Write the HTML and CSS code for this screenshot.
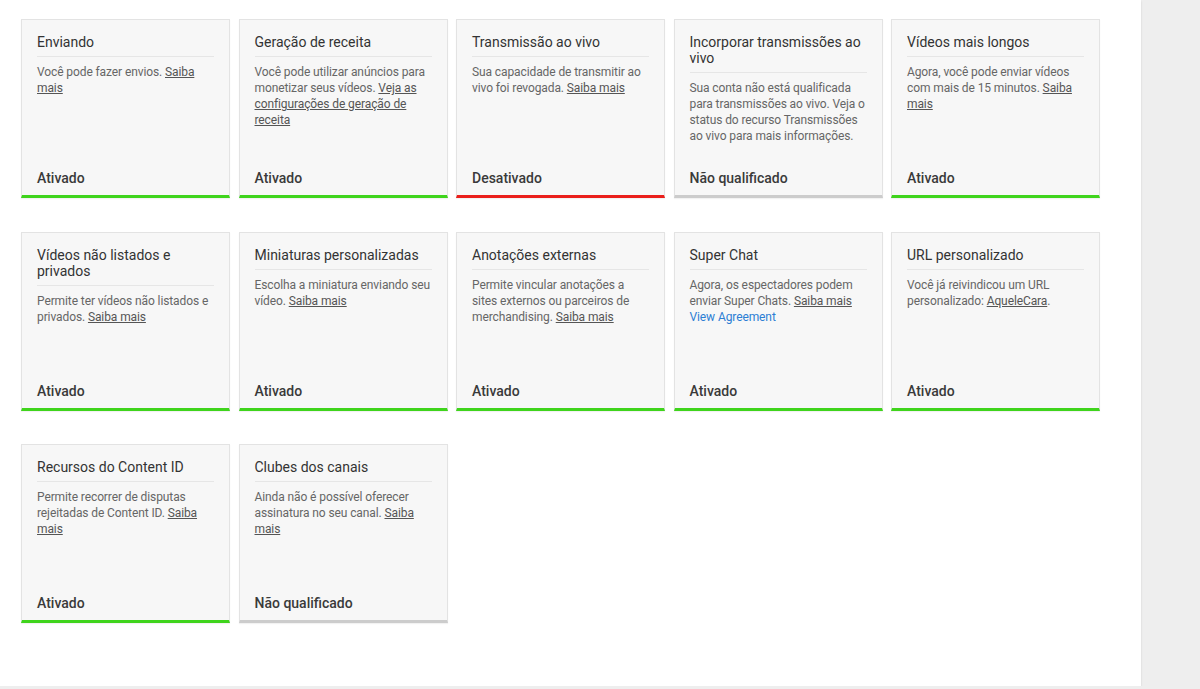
FILE: index.html
```html
<!DOCTYPE html>
<html>
<head lang="pt">
    <meta charset="UTF-8">
    <title>Status e recursos</title>
    <link rel="stylesheet" href="styles.css">
</head>
<body>
    <section class="wrapper">
        <ul class="features">
            <li class="card on">
                <h3 class="tit">Enviando</h3>
                <p class="desc">Você pode fazer envios. <a href="javascript:void(0);">Saiba mais</a></p>
                <span class="state">Ativado</span>
            </li>
            <li class="card on">
                <h3 class="tit">Geração de receita</h3>
                <p class="desc">Você pode utilizar anúncios para monetizar seus vídeos. <a href="javascript:void(0);">Veja as configurações de geração de receita</a></p>
                <span class="state">Ativado</span>
            </li>
            <li class="card off">
                <h3 class="tit">Transmissão ao vivo</h3>
                <p class="desc">Sua capacidade de transmitir ao vivo foi revogada. <a href="javascript:void(0);">Saiba mais</a></p>
                <span class="state">Desativado</span>
            </li>
            <li class="card na">
                <h3 class="tit">Incorporar transmissões ao vivo</h3>
                <p class="desc">Sua conta não está qualificada para transmissões ao vivo. Veja o status do recurso Transmissões ao vivo para mais informações.</p>
                <span class="state">Não qualificado</span>
            </li>
            <li class="card on">
                <h3 class="tit">Vídeos mais longos</h3>
                <p class="desc">Agora, você pode enviar vídeos com mais de 15 minutos. <a href="javascript:void(0);">Saiba mais</a></p>
                <span class="state">Ativado</span>
            </li>
            <li class="card on">
                <h3 class="tit">Vídeos não listados e privados</h3>
                <p class="desc">Permite ter vídeos não listados e privados. <a href="javascript:void(0);">Saiba mais</a></p>
                <span class="state">Ativado</span>
            </li>
            <li class="card on">
                <h3 class="tit">Miniaturas personalizadas</h3>
                <p class="desc">Escolha a miniatura enviando seu vídeo. <a href="javascript:void(0);">Saiba mais</a></p>
                <span class="state">Ativado</span>
            </li>
            <li class="card on">
                <h3 class="tit">Anotações externas</h3>
                <p class="desc">Permite vincular anotações a sites externos ou parceiros de merchandising. <a href="javascript:void(0);">Saiba mais</a></p>
                <span class="state">Ativado</span>
            </li>
            <li class="card on">
                <h3 class="tit">Super Chat</h3>
                <p class="desc">Agora, os espectadores podem enviar Super Chats. <a href="javascript:void(0);">Saiba mais</a><br><a href="javascript:void(0);" class="blue">View Agreement</a></p>
                <span class="state">Ativado</span>
            </li>
            <li class="card on">
                <h3 class="tit">URL personalizado</h3>
                <p class="desc">Você já reivindicou um URL personalizado: <a href="javascript:void(0);">AqueleCara</a>.</p>
                <span class="state">Ativado</span>
            </li>
            <li class="card on">
                <h3 class="tit">Recursos do Content ID</h3>
                <p class="desc">Permite recorrer de disputas rejeitadas de Content ID. <a href="javascript:void(0);">Saiba mais</a></p>
                <span class="state">Ativado</span>
            </li>
            <li class="card na">
                <h3 class="tit">Clubes dos canais</h3>
                <p class="desc">Ainda não é possível oferecer assinatura no seu canal. <a href="javascript:void(0);">Saiba mais</a></p>
                <span class="state">Não qualificado</span>
            </li>
        </ul>
    </section>
</body>
</html>
```

FILE: styles.css
```css
body{
    margin: 0;
    background-color: #eeeeee;
    font-family: Roboto, "Noto Sans", Arial, sans-serif;
    color: #333333;
}
ul{
    margin: 0;
    padding: 0;
    list-style-type: none;
}
a{
    color: #555555;
    text-decoration: underline;
}
.wrapper{
    width: 1141px;
    height: 686px;
    box-sizing: border-box;
    padding: 19px 21px;
    background-color: #ffffff;
    box-shadow: 0 1px 2px rgba(0,0,0,0.12);
}
.features{
    display: grid;
    grid-template-columns: repeat(5, 209px);
    column-gap: 8.5px;
    row-gap: 33.5px;
}
.card{
    display: flex;
    flex-direction: column;
    height: 179px;
    box-sizing: border-box;
    padding: 14px 15px 9px;
    background-color: #f7f7f7;
    border: 1px solid #e3e3e3;
    border-bottom: 3px solid #cccccc;
    box-shadow: 0 1px 1px rgba(0,0,0,0.05);
}
.card.on{
    border-bottom-color: #3fd41c;
}
.card.off{
    border-bottom-color: #ea1f1b;
}
.tit{
    margin: 0;
    padding-bottom: 6px;
    border-bottom: 1px solid #e6e6e6;
    font-size: 14px;
    line-height: 16px;
    font-weight: 400;
    color: #333333;
}
.desc{
    margin: 7px 0 0;
    font-size: 12px;
    line-height: 16px;
    letter-spacing: -0.1px;
    color: #666666;
}
.desc a.blue{
    color: #2c7ed4;
    text-decoration: none;
}
.state{
    margin-top: auto;
    font-size: 14px;
    line-height: 16px;
    font-weight: 500;
    color: #3a3a3a;
}
```
